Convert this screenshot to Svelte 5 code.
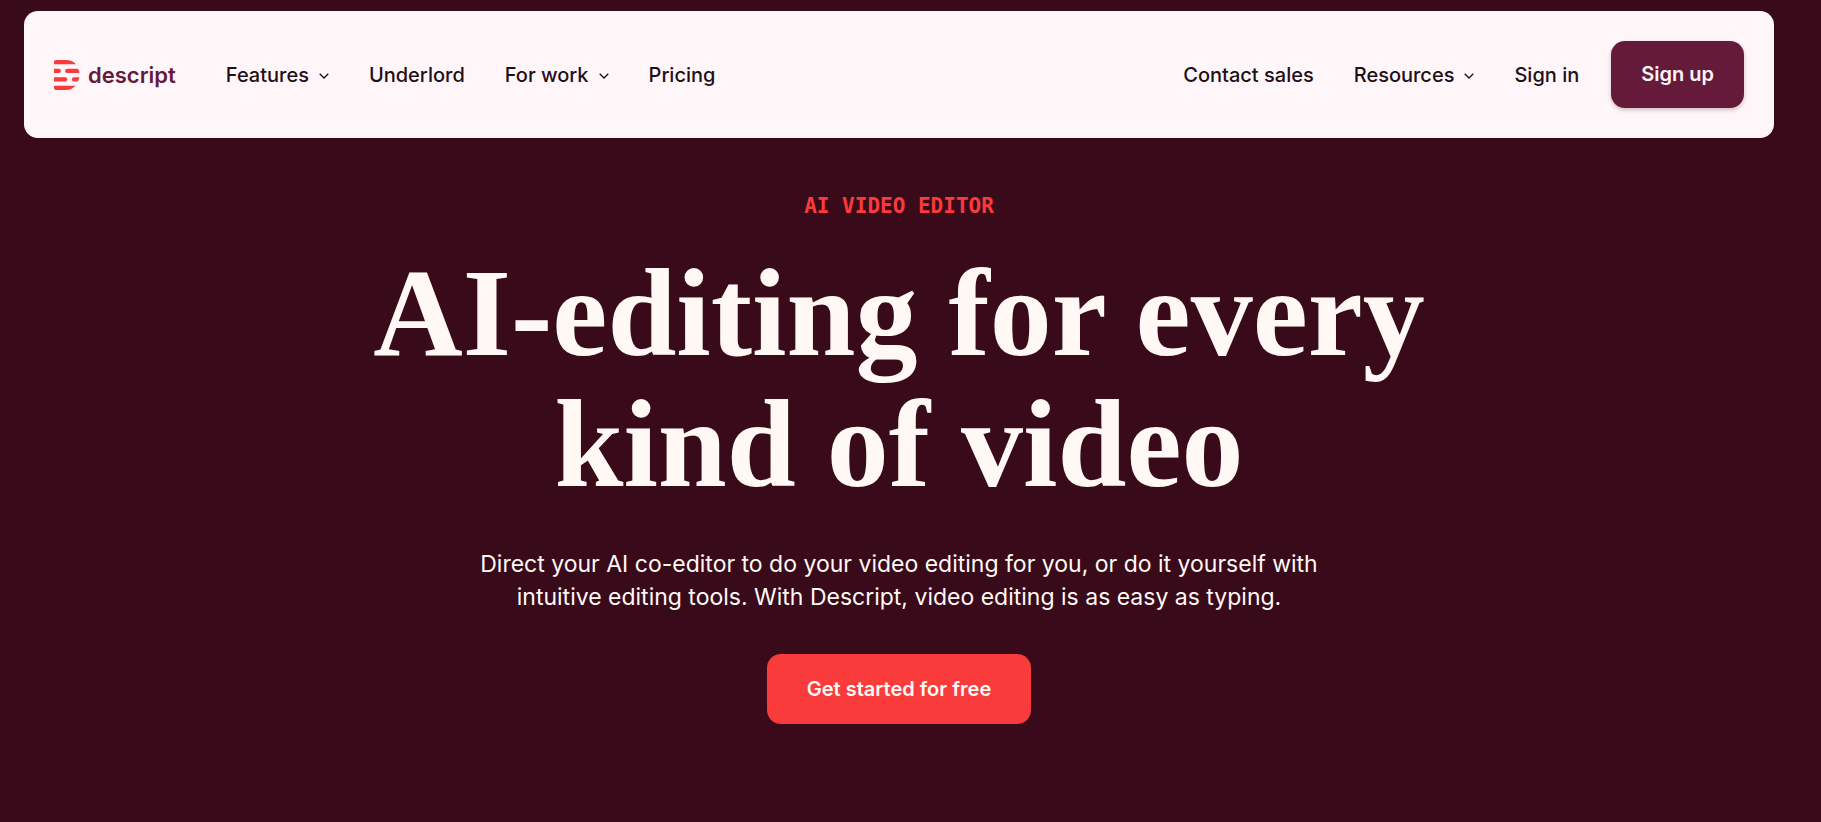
<script>
  const mainLinks = [
    { label: "Features", menu: true },
    { label: "Underlord", href: "/underlord" },
    { label: "For work", menu: true },
    { label: "Pricing", href: "/pricing" },
  ];

  const sideLinks = [
    { label: "Contact sales", href: "/contact" },
    { label: "Resources", menu: true },
    { label: "Sign in", href: "/login" },
  ];
</script>

{#snippet navItem(item)}
  <li>
    {#if item.menu}
      <button type="button" class="nav-item" aria-haspopup="true">
        {item.label}
        <svg class="chevron" viewBox="0 0 10 6" aria-hidden="true">
          <path d="M0.7 0.7 L5 5 L9.3 0.7" fill="none" stroke="currentColor" stroke-width="1.3" />
        </svg>
      </button>
    {:else}
      <a class="nav-item" href={item.href}>{item.label}</a>
    {/if}
  </li>
{/snippet}

<div class="page">
  <header class="navbar">
    <a class="logo" href="/">
      <svg class="logo-mark" viewBox="0 0 26 30" aria-hidden="true">
        <g fill="#f93b3b">
          <path d="M2 0 H12 Q18 0 22 4.2 H0 V2 Q0 0 2 0 Z" />
          <path d="M0 8.8 H4.8 A2.1 2.1 0 0 1 4.8 13 H0 Z" />
          <path d="M13.2 8.8 H24 Q25.2 10.6 25.4 13 H13.2 A2.1 2.1 0 0 1 13.2 8.8 Z" />
          <path d="M0 17.3 H11.2 A2.1 2.1 0 0 1 11.2 21.5 H0 Z" />
          <path d="M20 17.3 H25.4 Q25 19.6 23.8 21.5 H20 A2.1 2.1 0 0 1 20 17.3 Z" />
          <path d="M0 25.8 H21.6 Q17.6 30 12 30 H2 Q0 30 0 28 Z" />
        </g>
      </svg>
      <span>descript</span>
    </a>

    <nav class="nav" aria-label="Main">
      <ul class="links">
        {#each mainLinks as item}
          {@render navItem(item)}
        {/each}
      </ul>
      <ul class="links">
        {#each sideLinks as item}
          {@render navItem(item)}
        {/each}
      </ul>
    </nav>

    <a class="btn btn-signup" href="/signup">Sign up</a>
  </header>

  <main class="hero">
    <p class="eyebrow">AI VIDEO EDITOR</p>
    <h1>AI-editing for every<br />kind of video</h1>
    <p class="lead">
      Direct your AI co-editor to do your video editing for you, or do it yourself with
      intuitive editing tools. With Descript, video editing is as easy as typing.
    </p>
    <a class="btn btn-start" href="/signup">Get started for free</a>
  </main>
</div>

<style>
  :global(body) {
    margin: 0;
    background: #390a19;
  }

  .page {
    box-sizing: border-box;
    min-height: 100vh;
    padding: 11px 47px 48px 24px;
    background: #390a19;
    font-family: Inter, "Liberation Sans", sans-serif;
  }

  .navbar {
    display: flex;
    align-items: center;
    padding: 30px;
    border-radius: 14px;
    background: #fff6fa;
  }

  .logo {
    display: flex;
    align-items: center;
    gap: 8px;
    margin-right: 50px;
    color: #641a38;
    font-size: 22px;
    font-weight: 600;
    line-height: 30px;
    text-decoration: none;
  }

  .logo-mark {
    width: 26px;
    height: 30px;
  }

  .nav {
    flex: 1;
    display: flex;
    justify-content: space-between;
    margin-right: 32px;
  }

  .links {
    display: flex;
    gap: 40px;
    margin: 0;
    padding: 0;
    list-style: none;
  }

  .nav-item {
    display: flex;
    align-items: center;
    gap: 10px;
    padding: 0;
    border: none;
    background: none;
    color: #1f0f17;
    font-family: inherit;
    font-size: 20px;
    font-weight: 500;
    line-height: 28px;
    text-decoration: none;
    white-space: nowrap;
    cursor: pointer;
  }

  .chevron {
    width: 10px;
    height: 6px;
    margin-top: 3px;
  }

  .btn {
    border-radius: 14px;
    font-size: 20px;
    font-weight: 600;
    text-align: center;
    text-decoration: none;
    white-space: nowrap;
  }

  .btn-signup {
    padding: 0 30px;
    background: #641a38;
    color: #fff6fa;
    line-height: 67px;
    box-shadow: 0 2px 4px rgba(57, 10, 25, 0.25);
  }

  .hero {
    display: flex;
    flex-direction: column;
    align-items: center;
    padding-top: 52px;
    text-align: center;
  }

  .eyebrow {
    margin: 0;
    color: #f93b3b;
    font-family: "DejaVu Sans Mono", monospace;
    font-size: 21px;
    font-weight: 700;
    line-height: 32px;
  }

  h1 {
    margin: 26px 0 0;
    color: #fff8f5;
    font-family: "Liberation Serif", serif;
    font-size: 124px;
    font-weight: 700;
    line-height: 131px;
  }

  .lead {
    max-width: 860px;
    margin: 38px 0 0;
    color: #fff8f5;
    font-size: 23px;
    line-height: 33px;
  }

  .btn-start {
    margin-top: 40px;
    padding: 0 40px;
    background: #f93b3b;
    color: #fff8f5;
    line-height: 70px;
  }
</style>
